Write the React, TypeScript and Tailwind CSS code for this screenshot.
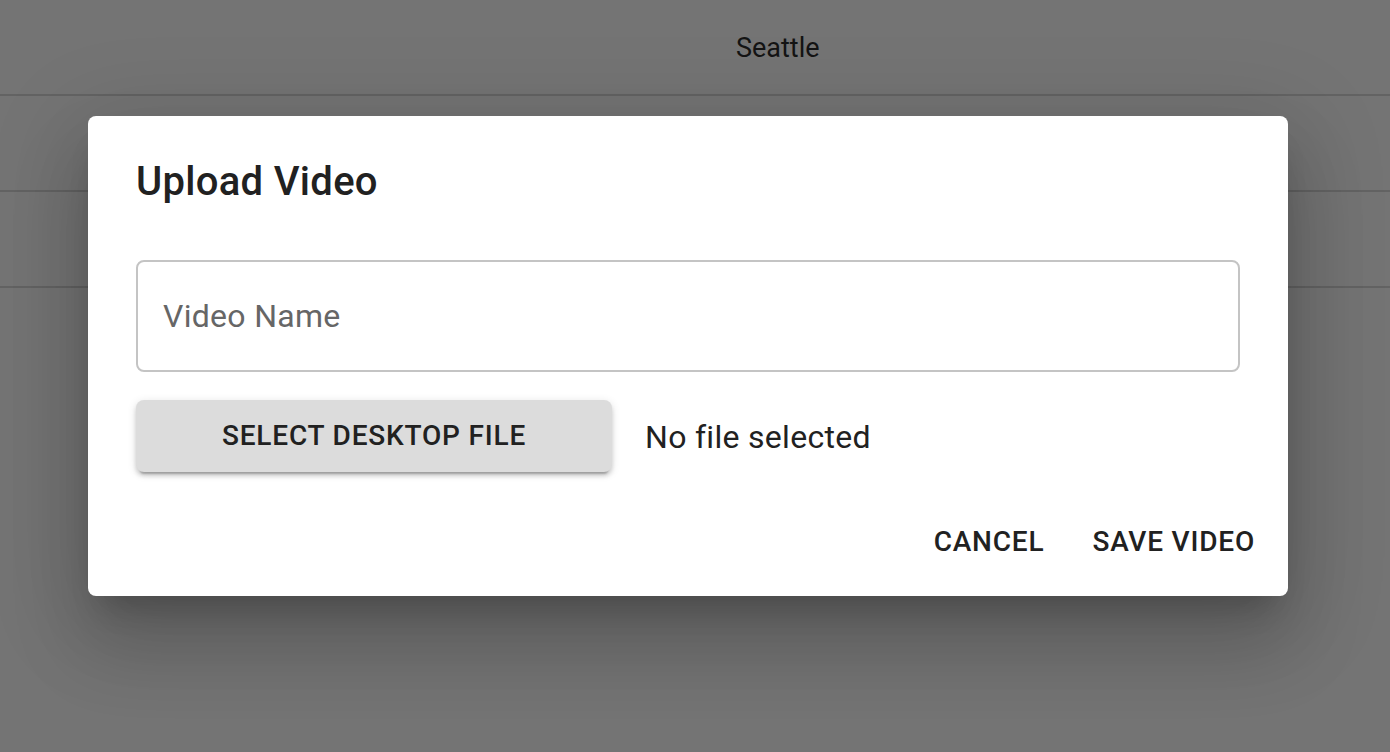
import React from "react";

export default function App() {
  return (
    <div
      className="relative w-full h-[752px] overflow-hidden bg-[#747474]"
      style={{ fontFamily: "Roboto, 'Noto Sans', Arial, sans-serif" }}
    >
      {/* background table (under backdrop) */}
      <div className="flex flex-col">
        <div className="flex h-[96px] items-center border-b-2 border-[#636363]">
          <div className="w-[736px]" />
          <div className="pt-[2px] text-[27px] text-[#141414] leading-none">Seattle</div>
        </div>
        <div className="h-[96px] border-b-2 border-[#636363]" />
        <div className="h-[96px] border-b-2 border-[#636363]" />
      </div>

      {/* dialog */}
      <div className="absolute left-[88px] top-[116px] w-[1200px] h-[480px] bg-white rounded-[8px] flex flex-col shadow-[0_22px_30px_-14px_rgba(0,0,0,0.2),0_48px_76px_6px_rgba(0,0,0,0.14),0_18px_92px_16px_rgba(0,0,0,0.12)]">
        <h2 className="px-[48px] pt-[34px] pb-[30px] text-[40px] leading-[64px] font-medium tracking-[0.3px] text-[#212121]">
          Upload Video
        </h2>
        <div className="px-[48px]">
          <div className="mt-[16px] h-[112px] border-2 border-[#c4c4c4] rounded-[8px] flex items-center pl-[25px]">
            <span className="text-[32px] text-[#666666] leading-none tracking-[0.3px]">Video Name</span>
          </div>
          <div className="mt-[28px] flex items-center">
            <button className="w-[476px] h-[72px] bg-[#dcdcdc] rounded-[8px] text-[28px] font-medium tracking-[0.8px] uppercase text-[#212121] shadow-[0_6px_2px_-4px_rgba(0,0,0,0.22),0_4px_4px_0_rgba(0,0,0,0.14),0_2px_10px_0_rgba(0,0,0,0.12)]">
              Select Desktop File
            </button>
            <span className="ml-[33px] pt-[2px] text-[32px] tracking-[0.3px] text-[#212121]">No file selected</span>
          </div>
        </div>
        <div className="mt-auto flex justify-end items-center gap-[16px] pl-[16px] pr-[17px] pt-[16px] pb-[18px]">
          <button className="h-[73px] px-[16px] text-[28px] font-medium tracking-[0.8px] uppercase text-[#212121]">
            Cancel
          </button>
          <button className="h-[73px] px-[16px] text-[28px] font-medium tracking-[0.8px] uppercase text-[#212121]">
            Save Video
          </button>
        </div>
      </div>
    </div>
  );
}
